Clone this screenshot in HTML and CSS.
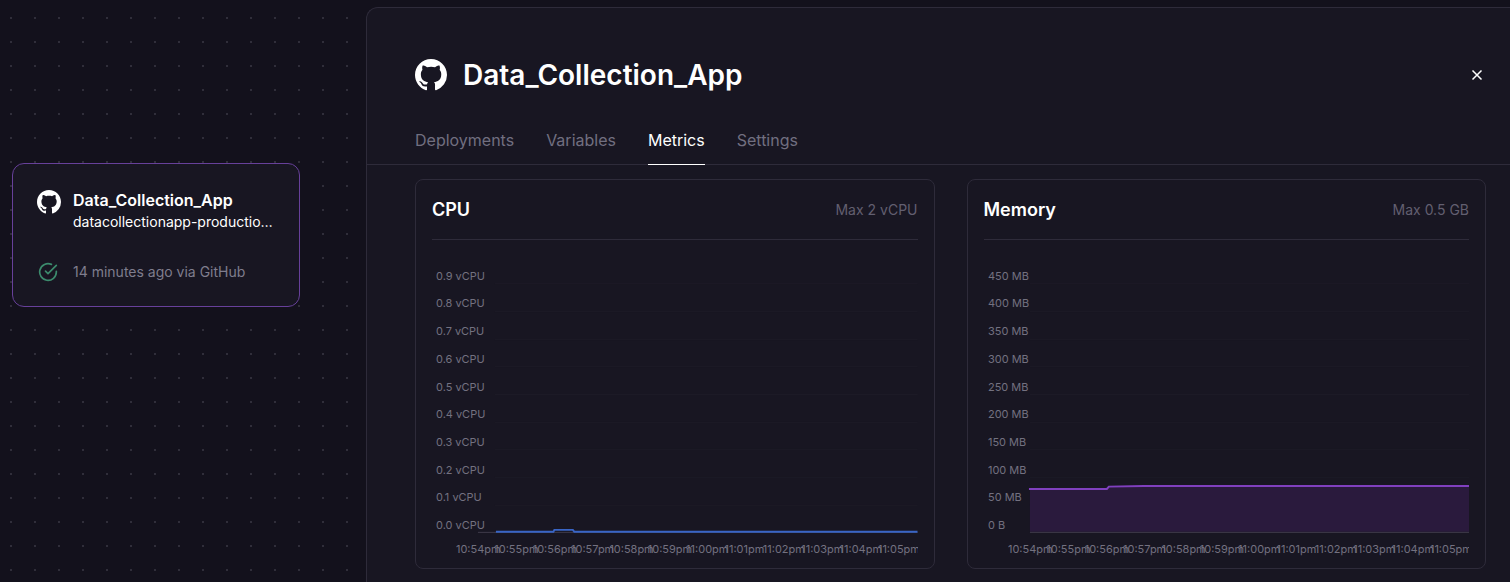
FILE: index.html
```html
<!DOCTYPE html>
<html lang="en">
<head>
    <meta charset="UTF-8">
    <meta name="viewport" content="width=device-width, initial-scale=1.0">
    <title>Data_Collection_App - Metrics</title>
    <link rel="stylesheet" href="styles.css">
</head>
<body>
    <svg class="sprites" width="0" height="0">
        <symbol id="github" viewBox="0 0 24 24">
            <path fill="currentColor" d="M12 0C5.37 0 0 5.37 0 12c0 5.31 3.435 9.795 8.205 11.385.6.105.825-.255.825-.57 0-.285-.015-1.23-.015-2.235-3.015.555-3.795-.735-4.035-1.41-.135-.345-.72-1.41-1.23-1.695-.42-.225-1.02-.78-.015-.795.945-.015 1.62.87 1.86 1.23 1.08 1.815 2.805 1.305 3.495.99.105-.78.42-1.305.765-1.605-2.67-.3-5.46-1.335-5.46-5.925 0-1.305.465-2.385 1.23-3.225-.12-.3-.54-1.53.12-3.18 0 0 1.005-.315 3.3 1.23.96-.27 1.98-.405 3-.405s2.04.135 3 .405c2.295-1.56 3.3-1.23 3.3-1.23.66 1.65.24 2.88.12 3.18.765.84 1.23 1.905 1.23 3.225 0 4.605-2.805 5.625-5.475 5.925.435.375.81 1.095.81 2.22 0 1.605-.015 2.895-.015 3.3 0 .315.225.69.825.57A12.02 12.02 0 0 0 24 12c0-6.63-5.37-12-12-12z"/>
        </symbol>
    </svg>

    <div class="canvas">
        <div class="service-card">
            <div class="service-head">
                <svg class="service-icon"><use href="#github"/></svg>
                <div class="service-names">
                    <div class="service-title">Data_Collection_App</div>
                    <div class="service-url">datacollectionapp-production.up.railway.app</div>
                </div>
            </div>
            <div class="service-status">
                <svg class="status-icon" viewBox="0 0 24 24"><path d="M22 11.08V12a10 10 0 1 1-5.93-9.14"/><path d="M22 4 12 14.01l-3-3"/></svg>
                <span>14 minutes ago via GitHub</span>
            </div>
        </div>
    </div>

    <main class="panel">
        <header class="panel-head">
            <svg class="panel-icon"><use href="#github"/></svg>
            <h1 class="panel-title">Data_Collection_App</h1>
            <svg class="close-icon" viewBox="0 0 12 12"><path d="M1.500 1.500l9 9M10.500 1.500l-9 9"/></svg>
        </header>

        <nav class="tabs">
            <a class="tab">Deployments</a>
            <a class="tab">Variables</a>
            <a class="tab active">Metrics</a>
            <a class="tab">Settings</a>
        </nav>

        <section class="metrics">
            <div class="metric-card">
                <div class="metric-head">
                    <h2 class="metric-name">CPU</h2>
                    <span class="metric-max">Max 2 vCPU</span>
                </div>
                <svg class="chart" viewBox="0 0 486 316">
                    <g class="grid">
                        <path d="M63 33.5H486M63 61.5H486M63 89.5H486M63 116.5H486M63 144.5H486M63 172.5H486M63 199.5H486M63 227.5H486M63 255.5H486"/>
                    </g>
                    <path class="axis" d="M46 282.5H486"/>
                    <path class="cpu-line" d="M64 282H121.500L122.500 280H141L142.500 282H486"/>
                    <g class="y-labels">
                        <text x="4" y="30">0.9 vCPU</text>
                        <text x="4" y="57">0.8 vCPU</text>
                        <text x="4" y="85">0.7 vCPU</text>
                        <text x="4" y="113">0.6 vCPU</text>
                        <text x="4" y="141">0.5 vCPU</text>
                        <text x="4" y="168">0.4 vCPU</text>
                        <text x="4" y="196">0.3 vCPU</text>
                        <text x="4" y="224">0.2 vCPU</text>
                        <text x="4" y="251">0.1 vCPU</text>
                        <text x="4" y="279">0.0 vCPU</text>
                    </g>
                    <g class="x-labels">
                        <text x="24" y="303">10:54pm</text>
                        <text x="62.400" y="303">10:55pm</text>
                        <text x="100.800" y="303">10:56pm</text>
                        <text x="139.200" y="303">10:57pm</text>
                        <text x="177.600" y="303">10:58pm</text>
                        <text x="216" y="303">10:59pm</text>
                        <text x="254.400" y="303">11:00pm</text>
                        <text x="292.800" y="303">11:01pm</text>
                        <text x="331.200" y="303">11:02pm</text>
                        <text x="369.600" y="303">11:03pm</text>
                        <text x="408" y="303">11:04pm</text>
                        <text x="446.400" y="303">11:05pm</text>
                    </g>
                </svg>
            </div>

            <div class="metric-card">
                <div class="metric-head">
                    <h2 class="metric-name">Memory</h2>
                    <span class="metric-max">Max 0.5 GB</span>
                </div>
                <svg class="chart" viewBox="0 0 486 316">
                    <g class="grid">
                        <path d="M46 33.5H486M46 61.5H486M46 89.5H486M46 116.5H486M46 144.5H486M46 172.5H486M46 199.5H486M46 227.5H486M46 255.5H486"/>
                    </g>
                    <path class="mem-fill" d="M46 239H123L125 236.500H486V282H46Z"/>
                    <path class="axis" d="M46 282.500H486"/>
                    <path class="mem-line" d="M45 239H123L125 236.700L160 236.200H486"/>
                    <g class="y-labels">
                        <text x="4" y="30">450 MB</text>
                        <text x="4" y="57">400 MB</text>
                        <text x="4" y="85">350 MB</text>
                        <text x="4" y="113">300 MB</text>
                        <text x="4" y="141">250 MB</text>
                        <text x="4" y="168">200 MB</text>
                        <text x="4" y="196">150 MB</text>
                        <text x="4" y="224">100 MB</text>
                        <text x="4" y="251">50 MB</text>
                        <text x="4" y="279">0 B</text>
                    </g>
                    <g class="x-labels">
                        <text x="24" y="303">10:54pm</text>
                        <text x="62.400" y="303">10:55pm</text>
                        <text x="100.800" y="303">10:56pm</text>
                        <text x="139.200" y="303">10:57pm</text>
                        <text x="177.600" y="303">10:58pm</text>
                        <text x="216" y="303">10:59pm</text>
                        <text x="254.400" y="303">11:00pm</text>
                        <text x="292.800" y="303">11:01pm</text>
                        <text x="331.200" y="303">11:02pm</text>
                        <text x="369.600" y="303">11:03pm</text>
                        <text x="408" y="303">11:04pm</text>
                        <text x="446.400" y="303">11:05pm</text>
                    </g>
                </svg>
            </div>
        </section>
    </main>
</body>
</html>
```

FILE: styles.css
```css
*{
    box-sizing: border-box;
}

html, body{
    height: 100%;
}

body{
    margin: 0;
    display: flex;
    overflow: hidden;
    background: #13111c;
    color: #fff;
    font-family: Inter, "Noto Sans", sans-serif;
}

.sprites{
    position: absolute;
}

/* left side, the project canvas */
.canvas{
    position: relative;
    flex: 0 0 366px;
    background-image: radial-gradient(circle at center, #302e3a 0.8px, transparent 1.1px);
    background-size: 24px 24px;
    background-position: -1px 6px;
}

.service-card{
    position: absolute;
    left: 12px;
    top: 163px;
    width: 288px;
    height: 144px;
    padding: 26px 24px 0;
    background: #181622;
    border: 1px solid #67409a;
    border-radius: 12px;
}

.service-head{
    display: flex;
    gap: 12px;
}

.service-icon{
    flex: none;
    width: 24px;
    height: 24px;
    color: #fff;
}

.service-names{
    min-width: 0;
    flex: 1;
}

.service-title{
    font-size: 16px;
    font-weight: 600;
    line-height: 20px;
}

.service-url{
    margin-top: 2px;
    font-size: 14px;
    line-height: 20px;
    white-space: nowrap;
    overflow: hidden;
    text-overflow: ellipsis;
}

.service-status{
    display: flex;
    align-items: center;
    gap: 15px;
    margin-top: 30px;
    padding-left: 1px;
    font-size: 14px;
    line-height: 20px;
    color: #7f7d8d;
}

.status-icon{
    width: 20px;
    height: 20px;
    fill: none;
    stroke: #3c8b6d;
    stroke-width: 2;
    stroke-linecap: round;
    stroke-linejoin: round;
}

/* right side, the service panel */
.panel{
    flex: 1;
    min-width: 0;
    margin-top: 7px;
    background: #181622;
    border: 1px solid #2e2b3a;
    border-right: none;
    border-bottom: none;
    border-top-left-radius: 12px;
}

.panel-head{
    display: flex;
    align-items: center;
    gap: 16px;
    height: 48px;
    margin-top: 43px;
    padding: 0 27px 0 48px;
}

.panel-icon{
    width: 32px;
    height: 32px;
    color: #fff;
}

.panel-title{
    flex: 1;
    margin: 0;
    font-size: 28px;
    font-weight: 600;
    line-height: 48px;
}

.close-icon{
    width: 12px;
    height: 12px;
    fill: none;
    stroke: #fff;
    stroke-width: 1.5;
}

.tabs{
    display: flex;
    gap: 32px;
    height: 37px;
    margin-top: 29px;
    padding-left: 48px;
    border-bottom: 1px solid #2e2b3a;
}

.tab{
    height: 37px;
    font-size: 16px;
    line-height: 24px;
    color: #716f80;
}

.tab.active{
    color: #fff;
    border-bottom: 1px solid #fff;
}

.metrics{
    display: grid;
    grid-template-columns: 519.500px 519.500px;
    gap: 32px;
    padding: 14px 0 0 48px;
}

.metric-card{
    height: 390px;
    padding: 0 16px;
    background: #181622;
    border: 1px solid #2e2b3a;
    border-radius: 8px;
}

.metric-head{
    display: flex;
    align-items: center;
    justify-content: space-between;
    height: 60px;
    border-bottom: 1px solid #2e2b3a;
}

.metric-name{
    margin: 0;
    font-size: 18px;
    font-weight: 600;
}

.metric-max{
    font-size: 14px;
    color: #625f70;
}

.chart{
    display: block;
    width: 100%;
    height: 316px;
    margin-top: 10px;
    font-size: 11px;
}

.grid path{
    stroke: #1c1a26;
    fill: none;
}

.axis{
    stroke: #3f3b4b;
    fill: none;
}

.cpu-line{
    stroke: #3965c6;
    stroke-width: 2;
    fill: none;
}

.mem-line{
    stroke: #8040bf;
    stroke-width: 2;
    fill: none;
}

.mem-fill{
    fill: #2a1a3d;
}

.y-labels text, .x-labels text{
    fill: #737180;
}
```
